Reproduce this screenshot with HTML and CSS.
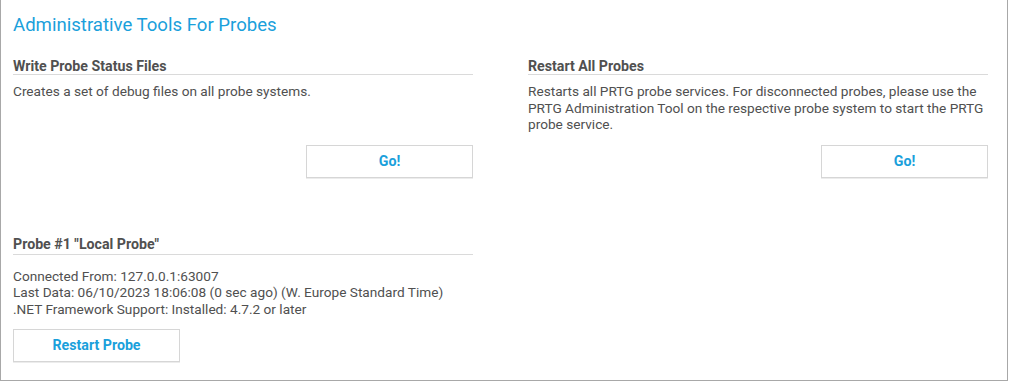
FILE: index.html
```html
<!DOCTYPE html>
<html>
<head>
<meta charset="utf-8">
<link rel="stylesheet" href="styles.css">
</head>
<body>
<div class="panel">
  <h1 class="title">Administrative Tools For Probes</h1>
  <div class="grid">
    <div class="section">
      <h3 class="heading">Write Probe Status Files</h3>
      <p class="text">Creates a set of debug files on all probe systems.</p>
      <button class="btn btn-end">Go!</button>
    </div>
    <div class="section">
      <h3 class="heading">Restart All Probes</h3>
      <p class="text">Restarts all PRTG probe services. For disconnected probes, please use the PRTG Administration Tool on the respective probe system to start the PRTG probe service.</p>
      <button class="btn btn-end">Go!</button>
    </div>
    <div class="section probe">
      <h3 class="heading">Probe #1 "Local Probe"</h3>
      <p class="text">Connected From: 127.0.0.1:63007<br>Last Data: 06/10/2023 18:06:08 (0 sec ago) (W. Europe Standard Time)<br>.NET Framework Support: Installed: 4.7.2 or later</p>
      <button class="btn btn-start">Restart Probe</button>
    </div>
  </div>
</div>
</body>
</html>
```
FILE: styles.css
```css
html, body {
  margin: 0;
  padding: 0;
  background: #fff;
}
.panel {
  box-sizing: border-box;
  width: 1008px;
  height: 381px;
  border: 1px solid #a8a8a8;
  border-top: none;
  padding: 13px 19px 0 12px;
  font-family: Roboto, "Liberation Sans", sans-serif;
  color: #505050;
}
.title {
  margin: 0;
  font-size: 18.6px;
  line-height: 24px;
  font-weight: 400;
  color: #1aa0db;
}
.grid {
  display: grid;
  grid-template-columns: 460px 460px;
  column-gap: 55px;
  row-gap: 58px;
  margin-top: 21px;
}
.section {
  display: flex;
  flex-direction: column;
}
.heading {
  margin: 0;
  font-size: 14.2px;
  line-height: 16px;
  font-weight: 700;
  color: #505050;
  border-bottom: 1px solid #dadada;
}
.text {
  margin: 8px 0 0;
  font-size: 13.65px;
  line-height: 16.5px;
  flex: 1;
}
.btn {
  box-sizing: border-box;
  width: 167px;
  height: 33px;
  margin-top: 12px;
  background: #fff;
  border: 1px solid #d6d6d6;
  box-shadow: 0 1px 0 #ececec;
  color: #1aa0db;
  font-family: Roboto, "Liberation Sans", sans-serif;
  font-size: 14.2px;
  font-weight: 700;
  padding: 0;
}
.btn-end {
  align-self: flex-end;
}
.probe .heading {
  padding-bottom: 2px;
}
.probe .text {
  margin-top: 13px;
  flex: none;
}
.btn-start {
  align-self: flex-start;
  margin-top: 11.5px;
}
```
